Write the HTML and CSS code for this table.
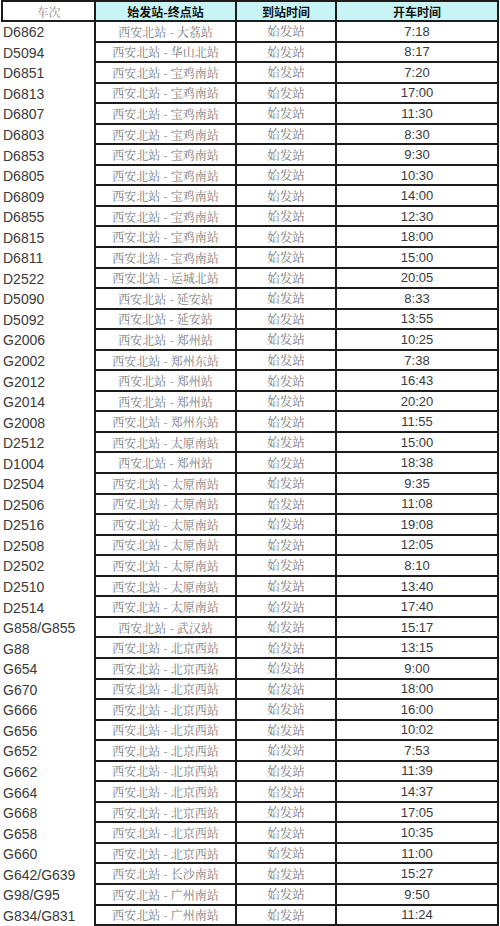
FILE: index.html
```html
<!DOCTYPE html>
<html lang="zh">
<head>
<meta charset="utf-8">
<title>西安北站 车次时刻表</title>
<link rel="stylesheet" href="styles.css">
</head>
<body>
<div class="sheet">
  <div class="row head">
    <div class="c c1">车次</div>
    <div class="c c2">始发站-终点站</div>
    <div class="c c3">到站时间</div>
    <div class="c c4">开车时间</div>
  </div>
  <div class="row"><div class="c c1">D6862</div><div class="c c2">西安北站 - 大荔站</div><div class="c c3">始发站</div><div class="c c4">7:18</div></div>
  <div class="row"><div class="c c1">D5094</div><div class="c c2">西安北站 - 华山北站</div><div class="c c3">始发站</div><div class="c c4">8:17</div></div>
  <div class="row"><div class="c c1">D6851</div><div class="c c2">西安北站 - 宝鸡南站</div><div class="c c3">始发站</div><div class="c c4">7:20</div></div>
  <div class="row"><div class="c c1">D6813</div><div class="c c2">西安北站 - 宝鸡南站</div><div class="c c3">始发站</div><div class="c c4">17:00</div></div>
  <div class="row"><div class="c c1">D6807</div><div class="c c2">西安北站 - 宝鸡南站</div><div class="c c3">始发站</div><div class="c c4">11:30</div></div>
  <div class="row"><div class="c c1">D6803</div><div class="c c2">西安北站 - 宝鸡南站</div><div class="c c3">始发站</div><div class="c c4">8:30</div></div>
  <div class="row"><div class="c c1">D6853</div><div class="c c2">西安北站 - 宝鸡南站</div><div class="c c3">始发站</div><div class="c c4">9:30</div></div>
  <div class="row"><div class="c c1">D6805</div><div class="c c2">西安北站 - 宝鸡南站</div><div class="c c3">始发站</div><div class="c c4">10:30</div></div>
  <div class="row"><div class="c c1">D6809</div><div class="c c2">西安北站 - 宝鸡南站</div><div class="c c3">始发站</div><div class="c c4">14:00</div></div>
  <div class="row"><div class="c c1">D6855</div><div class="c c2">西安北站 - 宝鸡南站</div><div class="c c3">始发站</div><div class="c c4">12:30</div></div>
  <div class="row"><div class="c c1">D6815</div><div class="c c2">西安北站 - 宝鸡南站</div><div class="c c3">始发站</div><div class="c c4">18:00</div></div>
  <div class="row"><div class="c c1">D6811</div><div class="c c2">西安北站 - 宝鸡南站</div><div class="c c3">始发站</div><div class="c c4">15:00</div></div>
  <div class="row"><div class="c c1">D2522</div><div class="c c2">西安北站 - 运城北站</div><div class="c c3">始发站</div><div class="c c4">20:05</div></div>
  <div class="row"><div class="c c1">D5090</div><div class="c c2">西安北站 - 延安站</div><div class="c c3">始发站</div><div class="c c4">8:33</div></div>
  <div class="row"><div class="c c1">D5092</div><div class="c c2">西安北站 - 延安站</div><div class="c c3">始发站</div><div class="c c4">13:55</div></div>
  <div class="row"><div class="c c1">G2006</div><div class="c c2">西安北站 - 郑州站</div><div class="c c3">始发站</div><div class="c c4">10:25</div></div>
  <div class="row"><div class="c c1">G2002</div><div class="c c2">西安北站 - 郑州东站</div><div class="c c3">始发站</div><div class="c c4">7:38</div></div>
  <div class="row"><div class="c c1">G2012</div><div class="c c2">西安北站 - 郑州站</div><div class="c c3">始发站</div><div class="c c4">16:43</div></div>
  <div class="row"><div class="c c1">G2014</div><div class="c c2">西安北站 - 郑州站</div><div class="c c3">始发站</div><div class="c c4">20:20</div></div>
  <div class="row"><div class="c c1">G2008</div><div class="c c2">西安北站 - 郑州东站</div><div class="c c3">始发站</div><div class="c c4">11:55</div></div>
  <div class="row"><div class="c c1">D2512</div><div class="c c2">西安北站 - 太原南站</div><div class="c c3">始发站</div><div class="c c4">15:00</div></div>
  <div class="row"><div class="c c1">D1004</div><div class="c c2">西安北站 - 郑州站</div><div class="c c3">始发站</div><div class="c c4">18:38</div></div>
  <div class="row"><div class="c c1">D2504</div><div class="c c2">西安北站 - 太原南站</div><div class="c c3">始发站</div><div class="c c4">9:35</div></div>
  <div class="row"><div class="c c1">D2506</div><div class="c c2">西安北站 - 太原南站</div><div class="c c3">始发站</div><div class="c c4">11:08</div></div>
  <div class="row"><div class="c c1">D2516</div><div class="c c2">西安北站 - 太原南站</div><div class="c c3">始发站</div><div class="c c4">19:08</div></div>
  <div class="row"><div class="c c1">D2508</div><div class="c c2">西安北站 - 太原南站</div><div class="c c3">始发站</div><div class="c c4">12:05</div></div>
  <div class="row"><div class="c c1">D2502</div><div class="c c2">西安北站 - 太原南站</div><div class="c c3">始发站</div><div class="c c4">8:10</div></div>
  <div class="row"><div class="c c1">D2510</div><div class="c c2">西安北站 - 太原南站</div><div class="c c3">始发站</div><div class="c c4">13:40</div></div>
  <div class="row"><div class="c c1">D2514</div><div class="c c2">西安北站 - 太原南站</div><div class="c c3">始发站</div><div class="c c4">17:40</div></div>
  <div class="row"><div class="c c1">G858/G855</div><div class="c c2">西安北站 - 武汉站</div><div class="c c3">始发站</div><div class="c c4">15:17</div></div>
  <div class="row"><div class="c c1">G88</div><div class="c c2">西安北站 - 北京西站</div><div class="c c3">始发站</div><div class="c c4">13:15</div></div>
  <div class="row"><div class="c c1">G654</div><div class="c c2">西安北站 - 北京西站</div><div class="c c3">始发站</div><div class="c c4">9:00</div></div>
  <div class="row"><div class="c c1">G670</div><div class="c c2">西安北站 - 北京西站</div><div class="c c3">始发站</div><div class="c c4">18:00</div></div>
  <div class="row"><div class="c c1">G666</div><div class="c c2">西安北站 - 北京西站</div><div class="c c3">始发站</div><div class="c c4">16:00</div></div>
  <div class="row"><div class="c c1">G656</div><div class="c c2">西安北站 - 北京西站</div><div class="c c3">始发站</div><div class="c c4">10:02</div></div>
  <div class="row"><div class="c c1">G652</div><div class="c c2">西安北站 - 北京西站</div><div class="c c3">始发站</div><div class="c c4">7:53</div></div>
  <div class="row"><div class="c c1">G662</div><div class="c c2">西安北站 - 北京西站</div><div class="c c3">始发站</div><div class="c c4">11:39</div></div>
  <div class="row"><div class="c c1">G664</div><div class="c c2">西安北站 - 北京西站</div><div class="c c3">始发站</div><div class="c c4">14:37</div></div>
  <div class="row"><div class="c c1">G668</div><div class="c c2">西安北站 - 北京西站</div><div class="c c3">始发站</div><div class="c c4">17:05</div></div>
  <div class="row"><div class="c c1">G658</div><div class="c c2">西安北站 - 北京西站</div><div class="c c3">始发站</div><div class="c c4">10:35</div></div>
  <div class="row"><div class="c c1">G660</div><div class="c c2">西安北站 - 北京西站</div><div class="c c3">始发站</div><div class="c c4">11:00</div></div>
  <div class="row"><div class="c c1">G642/G639</div><div class="c c2">西安北站 - 长沙南站</div><div class="c c3">始发站</div><div class="c c4">15:27</div></div>
  <div class="row"><div class="c c1">G98/G95</div><div class="c c2">西安北站 - 广州南站</div><div class="c c3">始发站</div><div class="c c4">9:50</div></div>
  <div class="row"><div class="c c1">G834/G831</div><div class="c c2">西安北站 - 广州南站</div><div class="c c3">始发站</div><div class="c c4">11:24</div></div>
</div>
</body>
</html>
```

FILE: styles.css
```css
html, body {
  margin: 0;
  padding: 0;
  background: #fff;
}

.sheet {
  width: 498px;
  height: 926px;
  margin-left: 1px;
  display: flex;
  flex-direction: column;
  font-family: "Liberation Sans", Arial, "Noto Sans CJK SC", sans-serif;
}

.row {
  flex: 1 1 0;
  min-height: 0;
  display: grid;
  grid-template-columns: 93px 143px 100px 162px;
}

.row.head {
  flex: 0 0 22px;
}

.c {
  box-sizing: border-box;
  display: flex;
  align-items: center;
  justify-content: center;
  white-space: nowrap;
  overflow: hidden;
}

.c1 {
  justify-content: flex-start;
  padding-left: 2px;
  font-size: 14px;
  color: #3a3a3a;
}

.c2, .c3, .c4 {
  border-right: 2px solid #1c1c1c;
  border-bottom: 2px solid #1c1c1c;
}

.c2 {
  border-left: 2px solid #1c1c1c;
  font-family: "Noto Serif CJK SC", "Noto Sans CJK SC", serif;
  font-size: 12px;
  color: #7a7a7a;
}

.c3 {
  font-family: "Noto Serif CJK SC", "Noto Sans CJK SC", serif;
  font-size: 12.5px;
  color: #7a7a7a;
}

.c4 {
  font-size: 13px;
  color: #3a3a3a;
}

.head .c {
  border-top: 2px solid #1c1c1c;
  border-bottom: 2px solid #1c1c1c;
}

.head .c1 {
  border-left: 2px solid #1c1c1c;
  justify-content: center;
  padding-left: 0;
  font-family: "Noto Serif CJK SC", "Noto Sans CJK SC", serif;
  font-size: 12px;
  color: #888;
}

.head .c2, .head .c3, .head .c4 {
  background: #c8f4f6;
  font-family: "Noto Sans CJK SC", sans-serif;
  font-weight: bold;
  font-size: 12px;
  color: #111;
}
```
